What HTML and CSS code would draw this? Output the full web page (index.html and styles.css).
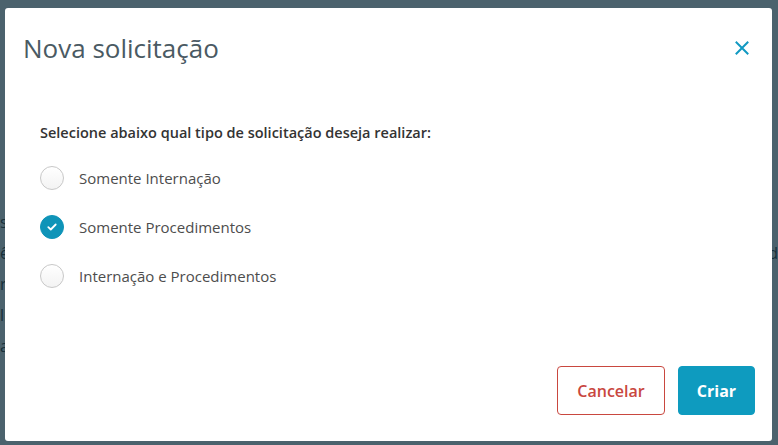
FILE: index.html
```html
<!DOCTYPE html>
<html lang="pt-BR">
<head>
<meta charset="utf-8">
<title>Nova solicitação</title>
<link rel="stylesheet" href="styles.css">
</head>
<body>
<div class="page">
  <div class="page-lines">
    <p class="bg-line"><span>sp</span></p>
    <p class="bg-line"><span>ês</span><span>d</span></p>
    <p class="bg-line"><span>ro</span></p>
    <p class="bg-line"><span>li</span></p>
    <p class="bg-line"><span>ar</span></p>
  </div>
</div>
<div class="overlay">
  <div class="modal" role="dialog" aria-labelledby="modal-title">
    <header class="modal-header">
      <h1 id="modal-title" class="modal-title">Nova solicitação</h1>
      <button class="close" aria-label="Fechar">
        <svg width="14" height="14" viewBox="0 0 14 14"><path d="M1.5 1.5 L12.5 12.5 M12.5 1.5 L1.5 12.5" stroke="#1199c2" stroke-width="2" fill="none" stroke-linecap="square"/></svg>
      </button>
    </header>
    <div class="modal-body">
      <p class="question">Selecione abaixo qual tipo de solicitação deseja realizar:</p>
      <ul class="options">
        <li class="option"><span class="radio"></span><span class="opt-label">Somente Internação</span></li>
        <li class="option"><span class="radio checked"><svg width="10" height="8" viewBox="0 0 10 8"><path d="M1.3 4.2 L3.8 6.5 L8.7 1.5" stroke="#fff" stroke-width="1.8" fill="none" stroke-linecap="round" stroke-linejoin="round"/></svg></span><span class="opt-label">Somente Procedimentos</span></li>
        <li class="option"><span class="radio"></span><span class="opt-label">Internação e Procedimentos</span></li>
      </ul>
    </div>
    <footer class="modal-footer">
      <button class="btn btn-cancel">Cancelar</button>
      <button class="btn btn-create">Criar</button>
    </footer>
  </div>
</div>
</body>
</html>
```
FILE: styles.css
```css
* { box-sizing: border-box; }
html, body { margin: 0; padding: 0; }
body {
  width: 778px;
  height: 445px;
  overflow: hidden;
  font-family: "Open Sans", "Lato", sans-serif;
  position: relative;
  background: #fff;
}
.page { padding: 207px 0 0 0; }
.page-lines { display: flex; flex-direction: column; }
.bg-line {
  margin: 0;
  height: 31px;
  line-height: 31px;
  font-size: 16px;
  color: #333;
  display: flex;
  justify-content: space-between;
}
.overlay {
  position: absolute;
  inset: 0;
  background: rgba(15, 45, 60, 0.75);
  padding: 8px 6px 4px 5px;
}
.modal {
  background: #fff;
  border-radius: 3px;
  height: 433px;
  display: flex;
  flex-direction: column;
}
.modal-header {
  display: flex;
  align-items: center;
  justify-content: space-between;
  padding: 0 23px 0 18px;
  height: 80px;
}
.modal-title {
  margin: 0 0 1px 0;
  font-weight: 400;
  font-size: 26px;
  color: #4a5a63;
}
.close {
  border: 0;
  background: transparent;
  padding: 0;
  width: 14px;
  height: 14px;
  display: flex;
  cursor: pointer;
}
.modal-body {
  flex: 1;
  padding: 35px 0 0 35px;
}
.question {
  margin: 0;
  font-size: 14.5px;
  font-weight: 600;
  color: #333;
}
.options {
  list-style: none;
  margin: 24px 0 0 0;
  padding: 0;
  display: flex;
  flex-direction: column;
  gap: 25px;
}
.option {
  display: flex;
  align-items: center;
  height: 24px;
}
.radio {
  width: 24px;
  height: 24px;
  border-radius: 50%;
  border: 1px solid #c8c8c8;
  background: linear-gradient(#fff, #f3f3f3);
  margin-right: 15px;
  display: flex;
  align-items: center;
  justify-content: center;
}
.radio.checked {
  background: #0f94b8;
  border-color: #0f94b8;
}
.opt-label {
  font-size: 15px;
  color: #4d4d4d;
}
.modal-footer {
  display: flex;
  justify-content: flex-end;
  gap: 13px;
  padding: 0 17px 26px 0;
}
.btn {
  height: 49px;
  border-radius: 4px;
  font-family: inherit;
  font-size: 16px;
  cursor: pointer;
}
.btn-cancel {
  width: 108px;
  background: #fff;
  border: 1px solid #c9473f;
  color: #c9473f;
  font-weight: 600;
}
.btn-create {
  width: 77px;
  background: #0e9bbf;
  border: 1px solid #0e9bbf;
  color: #fff;
  font-weight: 700;
}
```
